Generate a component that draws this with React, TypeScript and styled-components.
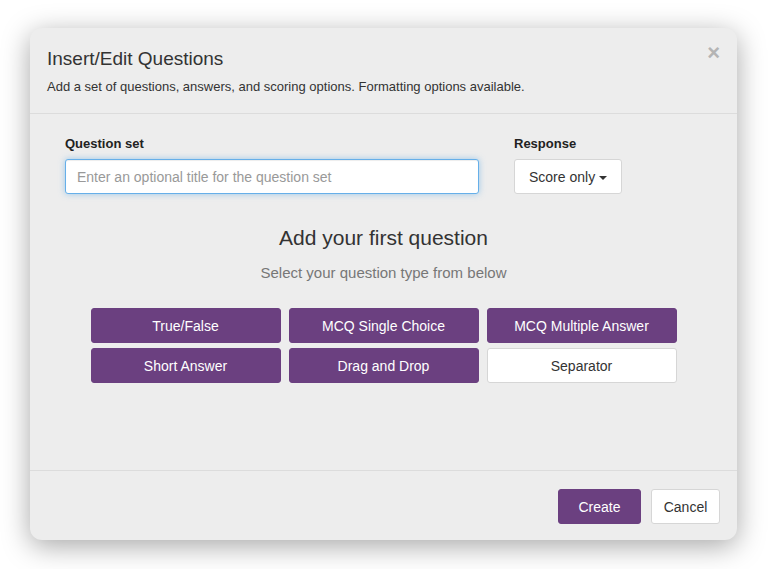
import styled, { createGlobalStyle } from 'styled-components';

const GlobalStyle = createGlobalStyle`
  html, body {
    margin: 0;
    padding: 0;
    background: #ffffff;
    font-family: "Liberation Sans", Arial, sans-serif;
  }
`;

const questionTypes = [
  { label: 'True/False' },
  { label: 'MCQ Single Choice' },
  { label: 'MCQ Multiple Answer' },
  { label: 'Short Answer' },
  { label: 'Drag and Drop' },
  { label: 'Separator', plain: true },
];

export default function App() {
  return (
    <>
      <GlobalStyle />
      <Page>
        <Modal>
          <Header>
            <Title>Insert/Edit Questions</Title>
            <Close aria-label="Close">×</Close>
            <Subtitle>
              Add a set of questions, answers, and scoring options. Formatting options available.
            </Subtitle>
          </Header>

          <Body>
            <FormRow>
              <Field $grow>
                <Label>Question set</Label>
                <TitleInput placeholder="Enter an optional title for the question set" />
              </Field>
              <Field>
                <Label>Response</Label>
                <SelectButton>
                  Score only <Caret />
                </SelectButton>
              </Field>
            </FormRow>

            <Prompt>
              <PromptTitle>Add your first question</PromptTitle>
              <PromptHint>Select your question type from below</PromptHint>
            </Prompt>

            <TypeGrid>
              {questionTypes.map((t) => (
                <TypeButton key={t.label} $plain={t.plain}>
                  {t.label}
                </TypeButton>
              ))}
            </TypeGrid>
          </Body>

          <Footer>
            <PrimaryButton>Create</PrimaryButton>
            <DefaultButton>Cancel</DefaultButton>
          </Footer>
        </Modal>
      </Page>
    </>
  );
}

const Page = styled.div`
  width: 768px;
  height: 569px;
  padding: 28px 0 0 30px;
  box-sizing: border-box;
`;

const Modal = styled.div`
  width: 707px;
  height: 512px;
  background: #ededed;
  border-radius: 12px;
  box-shadow: 0 6px 28px rgba(0, 0, 0, 0.35);
  display: flex;
  flex-direction: column;
  overflow: hidden;
`;

const Header = styled.div`
  position: relative;
  height: 86px;
  box-sizing: border-box;
  padding: 19px 17px 0 17px;
  border-bottom: 1px solid #dcdcdc;
`;

const Title = styled.h4`
  margin: 0;
  font-size: 19px;
  font-weight: normal;
  color: #333;
  line-height: 23px;
`;

const Close = styled.button`
  position: absolute;
  top: 14px;
  right: 17px;
  border: 0;
  background: none;
  padding: 0;
  font-family: "Liberation Sans", Arial, sans-serif;
  font-size: 22px;
  font-weight: bold;
  line-height: 22px;
  color: #b4b4b4;
  cursor: pointer;
`;

const Subtitle = styled.p`
  margin: 9px 0 0;
  font-size: 13px;
  color: #333;
  line-height: 16px;
`;

const Body = styled.div`
  flex: 1;
  padding: 21px 35px 0 35px;
  box-sizing: border-box;
  border-bottom: 1px solid #dcdcdc;
`;

const FormRow = styled.div`
  display: flex;
  gap: 35px;
`;

const Field = styled.div<{ $grow?: boolean }>`
  display: flex;
  flex-direction: column;
  width: ${(p) => (p.$grow ? '414px' : 'auto')};
`;

const Label = styled.label`
  font-size: 13px;
  font-weight: bold;
  color: #222;
  line-height: 18px;
  margin-bottom: 6px;
`;

const TitleInput = styled.input`
  height: 35px;
  box-sizing: border-box;
  border: 1px solid #66afe9;
  border-radius: 3px;
  background: #fff;
  padding: 0 11px;
  font-family: "Liberation Sans", Arial, sans-serif;
  font-size: 14px;
  color: #333;
  outline: none;
  box-shadow: inset 0 1px 1px rgba(0, 0, 0, 0.075), 0 0 6px rgba(102, 175, 233, 0.6);

  &::placeholder {
    color: #999;
  }
`;

const SelectButton = styled.button`
  height: 35px;
  box-sizing: border-box;
  border: 1px solid #d6d6d6;
  border-radius: 3px;
  background: #fff;
  padding: 0 14px;
  font-family: "Liberation Sans", Arial, sans-serif;
  font-size: 14px;
  color: #333;
  display: flex;
  align-items: center;
  gap: 4px;
`;

const Caret = styled.span`
  display: inline-block;
  width: 0;
  height: 0;
  border-left: 4px solid transparent;
  border-right: 4px solid transparent;
  border-top: 4px solid #333;
  margin-top: 2px;
`;

const Prompt = styled.div`
  text-align: center;
  margin-top: 32px;
`;

const PromptTitle = styled.h3`
  margin: 0;
  font-size: 21px;
  font-weight: normal;
  color: #333;
  line-height: 24px;
`;

const PromptHint = styled.p`
  margin: 14px 0 0;
  font-size: 15px;
  color: #777;
  line-height: 18px;
`;

const TypeGrid = styled.div`
  display: grid;
  grid-template-columns: repeat(3, 190px);
  grid-auto-rows: 35px;
  column-gap: 8px;
  row-gap: 5px;
  justify-content: center;
  margin-top: 26px;
`;

const TypeButton = styled.button<{ $plain?: boolean }>`
  height: 35px;
  border-radius: 3px;
  font-family: "Liberation Sans", Arial, sans-serif;
  font-size: 14px;
  border: 1px solid ${(p) => (p.$plain ? '#d6d6d6' : '#6b4080')};
  background: ${(p) => (p.$plain ? '#fff' : '#6b4080')};
  color: ${(p) => (p.$plain ? '#333' : '#fff')};
  cursor: pointer;
`;

const Footer = styled.div`
  height: 69px;
  box-sizing: border-box;
  padding: 18px 17px 0 0;
  display: flex;
  justify-content: flex-end;
  gap: 10px;
`;

const PrimaryButton = styled.button`
  height: 35px;
  width: 83px;
  border-radius: 3px;
  border: 1px solid #6b4080;
  background: #6b4080;
  color: #fff;
  font-family: "Liberation Sans", Arial, sans-serif;
  font-size: 14px;
`;

const DefaultButton = styled.button`
  height: 35px;
  width: 69px;
  border-radius: 3px;
  border: 1px solid #d6d6d6;
  background: #fff;
  color: #333;
  font-family: "Liberation Sans", Arial, sans-serif;
  font-size: 14px;
`;
